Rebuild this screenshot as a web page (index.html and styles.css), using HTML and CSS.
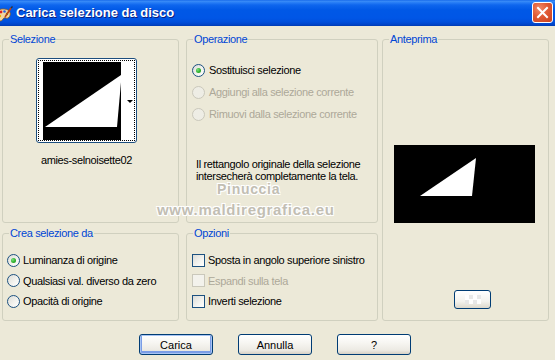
FILE: index.html
```html
<!DOCTYPE html>
<html lang="it">
<head>
<meta charset="utf-8">
<title>Carica selezione da disco</title>
<link rel="stylesheet" href="styles.css">
</head>
<body>
<div class="window">
  <div class="titlebar">
    <svg class="app-icon" width="14" height="16" viewBox="0 0 14 16">
      <path d="M-4 6 C-2 3 4 2 8 4 C11 6 11 10 8 12 C6 13 6 11 4 12 C2 13 3 15 0 15 C-3 15 -5 10 -4 6 Z" fill="#f3d7a0" stroke="#8a5a20" stroke-width="0.8"/>
      <circle cx="1" cy="6" r="1.4" fill="#e02020"/>
      <circle cx="4.5" cy="5.5" r="1.3" fill="#2a60e0"/>
      <circle cx="7" cy="8" r="1.2" fill="#20a030"/>
      <circle cx="0" cy="10" r="1.2" fill="#f0b000"/>
      <path d="M5 11 L11 2" stroke="#c04010" stroke-width="1.6"/>
      <path d="M11 2 L12.5 0.5" stroke="#303030" stroke-width="1.4"/>
    </svg>
    <span class="title">Carica selezione da disco</span>
    <div class="close">
      <svg width="21" height="21" viewBox="0 0 21 21">
        <path d="M6 6 L15 15 M15 6 L6 15" stroke="#fff" stroke-width="2" stroke-linecap="square"/>
      </svg>
    </div>
  </div>

  <div class="client">
    <div class="groups">
      <fieldset class="grp grp-sel">
        <legend>Selezione</legend>
        <div class="thumb-wrap">
          <div class="thumb">
            <svg class="thumb-img" width="78" height="78" viewBox="0 0 78 78">
              <rect width="78" height="78" fill="#000"/>
              <polygon points="2,65 78,13 78,20 74,65" fill="#fff"/>
            </svg>
            <div class="thumb-drop"><span class="arrow"></span></div>
          </div>
          <div class="thumb-name">amies-selnoisette02</div>
        </div>
      </fieldset>

      <fieldset class="grp grp-op">
        <legend>Operazione</legend>
        <div class="opt-list op-list">
          <div class="opt"><span class="radio checked"></span><span>Sostituisci selezione</span></div>
          <div class="opt disabled"><span class="radio"></span><span>Aggiungi alla selezione corrente</span></div>
          <div class="opt disabled"><span class="radio"></span><span>Rimuovi dalla selezione corrente</span></div>
        </div>
        <p class="info">Il rettangolo originale della selezione<br>intersecherà completamente la tela.</p>
      </fieldset>

      <fieldset class="grp grp-prev">
        <legend>Anteprima</legend>
        <svg class="preview" width="141" height="78" viewBox="0 0 141 78">
          <rect width="141" height="78" fill="#000"/>
          <polygon points="26,51 82,13 78,51" fill="#fff"/>
        </svg>
        <div class="btn-small"><span class="checker"></span></div>
      </fieldset>

      <fieldset class="grp grp-crea">
        <legend>Crea selezione da</legend>
        <div class="opt-list crea-list">
          <div class="opt"><span class="radio checked"></span><span>Luminanza di origine</span></div>
          <div class="opt"><span class="radio"></span><span>Qualsiasi val. diverso da zero</span></div>
          <div class="opt"><span class="radio"></span><span>Opacità di origine</span></div>
        </div>
      </fieldset>

      <fieldset class="grp grp-opz">
        <legend>Opzioni</legend>
        <div class="opt-list opz-list">
          <div class="opt"><span class="check"></span><span>Sposta in angolo superiore sinistro</span></div>
          <div class="opt disabled"><span class="check"></span><span>Espandi sulla tela</span></div>
          <div class="opt"><span class="check"></span><span>Inverti selezione</span></div>
        </div>
      </fieldset>
    </div>

    <div class="buttons">
      <div class="btn default">Carica</div>
      <div class="btn">Annulla</div>
      <div class="btn">?</div>
    </div>

    <div class="watermark">
      <span class="wm1">Pinuccia</span>
      <span class="wm2">www.maldiregrafica.eu</span>
    </div>
  </div>
</div>
</body>
</html>
```

FILE: styles.css
```css
html, body {
  margin: 0;
  padding: 0;
}
body {
  width: 555px;
  height: 360px;
  overflow: hidden;
  background: #ECE9D8;
  font-family: "Liberation Sans", Arial, sans-serif;
  font-size: 11px;
  letter-spacing: -0.35px;
  color: #000;
}
.window {
  width: 555px;
  height: 360px;
  display: flex;
  flex-direction: column;
}
.titlebar {
  height: 26px;
  flex: 0 0 26px;
  display: flex;
  align-items: center;
  background: linear-gradient(180deg, #0A5EE8 0px, #3D8EF6 1px, #2E83F7 2px, #0E66EE 5px, #0058E6 10px, #0056E6 18px, #004FDB 22px, #0042C4 25px, #003AAE 26px);
  position: relative;
}
.app-icon {
  flex: 0 0 14px;
  margin-top: 1px;
}
.title {
  margin-left: 2px;
  color: #fff;
  font-weight: bold;
  font-size: 13px;
  letter-spacing: 0;
  text-shadow: 1px 1px 0 #0A1E80;
  margin-top: -1px;
}
.close {
  margin-left: auto;
  margin-right: 2px;
  width: 21px;
  height: 21px;
  box-sizing: border-box;
  border: 1px solid #fff;
  border-radius: 3px;
  background: radial-gradient(circle at 35% 30%, #F08A6A 0%, #E05A35 45%, #C8411E 100%);
  display: flex;
  align-items: center;
  justify-content: center;
  margin-top: -1px;
}
.close svg {
  margin: -1px;
}
.client {
  flex: 1;
  position: relative;
  padding: 7px 0 0 2px;
}
.groups {
  display: grid;
  grid-template-columns: 177px 7px 192px 4px 167px;
  grid-template-rows: 190px 94px;
  row-gap: 4px;
}
.grp {
  margin: 0;
  padding: 0;
  min-width: 0;
  border: 1px solid #D0D0BF;
  border-radius: 3px;
  box-sizing: border-box;
}
.grp legend {
  padding: 0 1px;
  margin-left: 6px;
  color: #0046D5;
  line-height: 13px;
}
.grp-sel { grid-column: 1; grid-row: 1; }
.grp-op { grid-column: 3; grid-row: 1; }
.grp-prev { grid-column: 5; grid-row: 1 / span 2; }
.grp-crea { grid-column: 1; grid-row: 2; }
.grp-opz { grid-column: 3; grid-row: 2; }

/* thumbnail */
.thumb-wrap {
  width: 101px;
  margin: 12px 0 0 33px;
  display: flex;
  flex-direction: column;
  align-items: center;
}
.thumb {
  width: 101px;
  height: 85px;
  box-sizing: border-box;
  border: 1px solid #1C4E7E;
  border-radius: 3px;
  background: #fff;
  display: flex;
  padding: 3px 0 2px 6px;
  position: relative;
}
.thumb::after {
  content: "";
  position: absolute;
  left: 1px;
  top: 1px;
  right: 1px;
  bottom: 1px;
  border: 1px dotted #000;
}
.thumb-img {
  display: block;
  flex: 0 0 78px;
}
.thumb-drop {
  flex: 1;
  display: flex;
  align-items: center;
  justify-content: center;
}
.arrow {
  width: 0;
  height: 0;
  border-left: 3px solid transparent;
  border-right: 3px solid transparent;
  border-top: 3px solid #000;
  margin-left: 3px;
}
.thumb-name {
  margin-top: 11px;
  line-height: 13px;
  white-space: nowrap;
}

/* options */
.opt-list {
  display: flex;
  flex-direction: column;
}
.opt {
  display: flex;
  align-items: center;
  gap: 3px;
  white-space: nowrap;
}
.op-list {
  margin-top: 13px;
  padding-left: 5px;
}
.op-list .opt {
  height: 22px;
  gap: 4px;
}
.crea-list {
  margin-top: 10px;
  padding-left: 4px;
}
.crea-list .opt, .opz-list .opt {
  height: 20.5px;
}
.opz-list {
  margin-top: 10px;
  padding-left: 5px;
}
.opt.disabled {
  color: #ACA899;
}
.radio {
  flex: 0 0 13px;
  width: 13px;
  height: 13px;
  box-sizing: border-box;
  border-radius: 50%;
  border: 1px solid #1C5180;
  background: linear-gradient(135deg, #DCDCD7 0%, #F4F4F0 60%, #FFFFFF 100%);
  position: relative;
}
.radio.checked::after {
  content: "";
  position: absolute;
  left: 3px;
  top: 3px;
  width: 5px;
  height: 5px;
  border-radius: 50%;
  background: radial-gradient(circle at 35% 35%, #7CE07C 0%, #2DB12D 55%, #1E8F1E 100%);
}
.disabled .radio {
  border-color: #CAC8BB;
  background: #EEEDE5;
}
.check {
  flex: 0 0 13px;
  width: 13px;
  height: 13px;
  box-sizing: border-box;
  border: 1px solid #1C5180;
  background: linear-gradient(135deg, #DCDCD7 0%, #F4F4F0 60%, #FFFFFF 100%);
}
.disabled .check {
  border-color: #CAC8BB;
  background: #F3F2EC;
}
.info {
  margin: 33px 0 0 9px;
  line-height: 12px;
}

/* preview */
.preview {
  display: block;
  margin: 99px 0 0 11px;
}
.btn-small {
  width: 37px;
  height: 19px;
  box-sizing: border-box;
  margin: 67px 0 0 71px;
  border: 1px solid #003C74;
  border-radius: 3px;
  background: linear-gradient(180deg, #FFFFFF 0%, #F4F3EE 60%, #DCD8CC 100%);
  display: flex;
  align-items: center;
  justify-content: center;
}
.checker {
  width: 16px;
  height: 9px;
  background:
    conic-gradient(#E6E6E6 25%, #FFFFFF 0 50%, #E6E6E6 0 75%, #FFFFFF 0) 0 0 / 8px 9px;
  opacity: 0.9;
}

/* buttons */
.buttons {
  display: flex;
  gap: 25px;
  margin: 13px 0 0 137px;
}
.btn {
  width: 74px;
  height: 21px;
  box-sizing: border-box;
  border: 1px solid #003C74;
  border-radius: 3px;
  background: linear-gradient(180deg, #FFFFFF 0%, #F7F6F2 40%, #ECEAE3 80%, #D6D0C5 100%);
  display: flex;
  align-items: center;
  justify-content: center;
  letter-spacing: 0;
}
.btn.default {
  box-shadow: inset 0 0 0 1px #A8C4F3, inset 0 -1px 0 2px #7B9DE6;
}

/* watermark overlay */
.watermark {
  position: absolute;
  left: 0;
  top: 0;
  pointer-events: none;
  font-weight: bold;
  letter-spacing: 0.7px;
  line-height: 1;
  color: #C2BEB3;
  text-shadow: -1px -1px 0 #FFFFFF, 1px 1px 0 #FFFFFF, 1px -1px 0 #FFFFFF, -1px 1px 0 #FFFFFF;
}
.wm1 {
  position: absolute;
  left: 217px;
  top: 156px;
  font-size: 14px;
  white-space: nowrap;
}
.wm2 {
  position: absolute;
  left: 157px;
  top: 176px;
  font-size: 15px;
  white-space: nowrap;
}
```
